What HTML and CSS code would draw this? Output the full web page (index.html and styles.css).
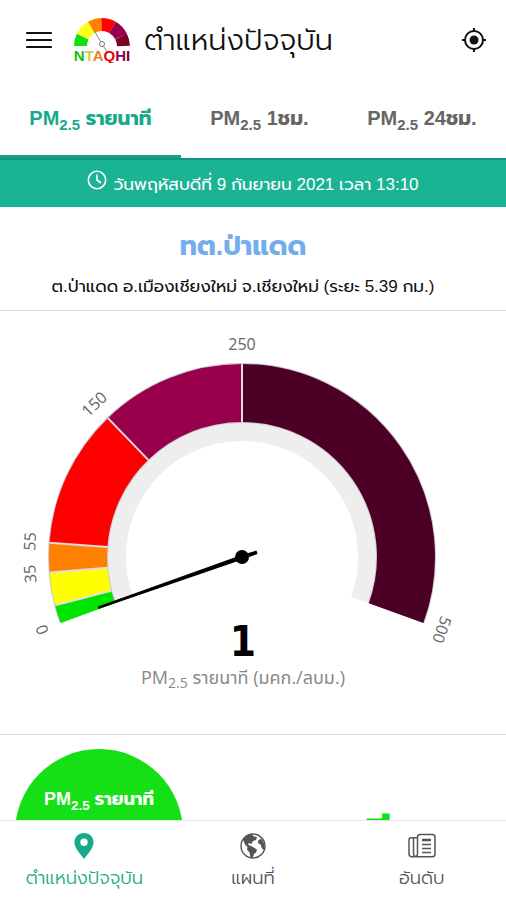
FILE: index.html
```
<!DOCTYPE html>
<html lang="th">
	<head>
		<meta charset="utf-8">
		<meta name="viewport" content="width=device-width, initial-scale=1">
		<title>NTAQHI</title>
		<link rel="stylesheet" href="styles.css">
	</head>
	<body>
		<header class="header">
			<button class="icon-btn" type="button" aria-label="เมนู">
				<svg width="26" height="26" viewBox="0 0 26 26"><path d="M1 6h24M1 13h24M1 20h24" stroke="#111" stroke-width="2.200" stroke-linecap="round"/></svg>
			</button>
			<svg class="logo" width="58" height="46" viewBox="0 0 58 46">
				<g fill="none" stroke-width="13">
					<path d="M7.500 29A21.500 21.500 0 0 1 9.700 19.500" stroke="#0fdf0f"/>
					<path d="M9.700 19.500A21.500 21.500 0 0 1 18.300 10.400" stroke="#ffff1a"/>
					<path d="M18.300 10.400A21.500 21.500 0 0 1 28.500 7.500" stroke="#ff8000"/>
					<path d="M28.500 7.500A21.500 21.500 0 0 1 39.500 10.300" stroke="#f00"/>
					<path d="M39.500 10.300A21.500 21.500 0 0 1 48 19.500" stroke="#99004c"/>
					<path d="M48 19.500A21.500 21.500 0 0 1 50.500 29" stroke="#7e0023"/>
				</g>
				<path d="M22 15L34 35" stroke="#888" stroke-width="1"/>
				<circle cx="29" cy="27" r="2.500" fill="#fff" stroke="#777"/>
				<text class="logo-text" x="29" y="44" text-anchor="middle"><tspan fill="#0fc40f">N</tspan><tspan fill="#dccb3c">T</tspan><tspan fill="#e98122">A</tspan><tspan fill="#e00">Q</tspan><tspan fill="#99004c">H</tspan><tspan fill="#7e0023">I</tspan></text>
			</svg>
			<h1 class="title">ตำแหน่งปัจจุบัน</h1>
			<button class="icon-btn" type="button" aria-label="ระบุตำแหน่ง">
				<svg width="24" height="24" viewBox="0 0 24 24"><circle cx="12" cy="12" r="9" fill="none" stroke="#111" stroke-width="2"/><circle cx="12" cy="12" r="4.500" fill="#111"/><path d="M12 0v4M12 20v4M0 12h4M20 12h4" stroke="#111" stroke-width="2"/></svg>
			</button>
		</header>

		<nav class="tabs">
			<button class="tab act" type="button">PM<sub>2.5</sub> รายนาที</button>
			<button class="tab" type="button">PM<sub>2.5</sub> 1ชม.</button>
			<button class="tab" type="button">PM<sub>2.5</sub> 24ชม.</button>
		</nav>

		<main class="content">
			<div class="date">
				<svg width="20" height="20" viewBox="0 0 20 20" fill="none" stroke="#fff" stroke-width="1.600"><circle cx="10" cy="10" r="8.700"/><path d="M10 4.500V10l4 3"/></svg>
				<span>วันพฤหัสบดีที่ 9 กันยายน 2021 เวลา 13:10</span>
			</div>

			<section class="station">
				<h2 class="station-name">ทต.ป่าแดด</h2>
				<p class="station-addr">ต.ป่าแดด อ.เมืองเชียงใหม่ จ.เชียงใหม่ (ระยะ 5.39 กม.)</p>
			</section>

			<section class="gauge">
				<svg class="gauge-svg" viewBox="0 0 506 423">
					<path d="M124.100 288.900A125.500 125.500 0 1 1 359.900 288.900" fill="none" stroke="#eee" stroke-width="19"/>
					<!-- scale 0 - 500, 220 degrees -->
					<g fill="none" stroke-width="58">
						<path d="M87.900 302.100A164 164 0 1 1 396.100 302.100" stroke="#ccc8d6" stroke-width="60"/>
						<path d="M242 82A164 164 0 0 1 396.100 302.100" stroke="#4c0026"/>
						<path d="M128.100 128A164 164 0 0 1 242 82" stroke="#99004c"/>
						<path d="M78.400 234A164 164 0 0 1 128.100 128" stroke="#f00"/>
						<path d="M78.500 259.200A164 164 0 0 1 78.400 234" stroke="#ff8000"/>
						<path d="M83.200 287.100A164 164 0 0 1 78.500 259.200" stroke="#ff0"/>
						<path d="M87.900 302.100A164 164 0 0 1 83.200 287.100" stroke="#00e400"/>
					</g>
					<g stroke="#e6dcdc" stroke-width="2">
						<path d="M49 246h58" transform="rotate(-14.500 242 246)"/>
						<path d="M49 246h58" transform="rotate(-4.600 242 246)"/>
						<path d="M49 246h58" transform="rotate(4.200 242 246)"/>
						<path d="M49 246h58" transform="rotate(46 242 246)"/>
						<path d="M49 246h58" transform="rotate(90 242 246)"/>
					</g>
					<g class="gauge-num" text-anchor="middle">
						<text x="242" y="39" transform="rotate(-110 242 246)">0</text>
						<text x="242" y="39" transform="rotate(-94.600 242 246)">35</text>
						<text x="242" y="39" transform="rotate(-85.800 242 246)">55</text>
						<text x="242" y="39" transform="rotate(-44 242 246)">150</text>
						<text x="242" y="39">250</text>
						<text x="242" y="39" transform="rotate(110 242 246)">500</text>
					</g>
					<path d="M98 295.500L98.500 298L242.500 248.500L257.500 243L256.500 239.500L241.500 244z" fill="#000"/>
					<circle cx="242" cy="246" r="7" fill="#000"/>
					<text class="gauge-value" x="243" y="345" text-anchor="middle">1</text>
					<text class="gauge-unit" x="243" y="373" text-anchor="middle">PM<tspan class="unit-sub" dy="4">2.5</tspan><tspan dy="-4"> รายนาที (มคก./ลบม.)</tspan></text>
				</svg>
			</section>

			<section class="summary">
				<div class="circle">PM<sub>2.5</sub> รายนาที</div>
				<div class="level">ดี</div>
			</section>
		</main>

		<nav class="tabbar">
			<a class="tabbar-item act" href="#">
				<svg width="28" height="28" viewBox="0 0 28 28"><path fill-rule="evenodd" d="M14 1C8.500 1 4.500 5 4.500 10.200C4.500 16 9 20 14 27C19 20 23.500 16 23.500 10.200C23.500 5 19.500 1 14 1zM14 6.500a3.700 3.700 0 1 1 0 7.400a3.700 3.700 0 0 1 0-7.400z" fill="currentColor"/></svg>
				<span>ตำแหน่งปัจจุบัน</span>
			</a>
			<a class="tabbar-item" href="#">
				<svg width="28" height="28" viewBox="0 0 28 28"><circle cx="14" cy="14" r="12" fill="none" stroke="currentColor" stroke-width="1.400"/><path fill="currentColor" d="M4 7.500C6 4.500 9 2.700 12.500 2.300L15 4.500l3 .5l-1 3l-3 1l-1.500 3l-2.500-1l-1 1.500l3 1.500l3.500 2l2.500 1.500l-1 3l-2 1.500l-1.500 4l-2-.5l-1-5l-2.500-3l.5-2.500L6 12.500zM20 4l3.500 4l2.300 5l-.8 5l-2.500-2l-.5-3l-3-2l.5-3l2.500-1z"/></svg>
				<span>แผนที่</span>
			</a>
			<a class="tabbar-item" href="#">
				<svg width="28" height="28" viewBox="0 0 28 28" fill="none" stroke="currentColor" stroke-width="1.500"><path d="M9.500 21V5q0-2.500 2.500-2.500h12.500q2.500 0 2.500 2.500v17q0 2.800-2.800 2.800H4q-3 0-3-3V8q0-2.300 2.300-2.300h6.200M9.500 21q0 3.500-2 3.500T5.500 21V6"/><path d="M14 8h9M14 12.500h9M14 16.500h9M14 20.500h9"/><path d="M14 8h9" stroke-width="2.500"/></svg>
				<span>อันดับ</span>
			</a>
		</nav>
	</body>
</html>
```
FILE: styles.css
```
*{
	margin: 0;
	padding: 0;
	box-sizing: border-box;
}
body{
	display: flex;
	flex-direction: column;
	height: 100vh;
	overflow: hidden;
	background-color: #fff;
	color: #111;
	font-family: "Liberation Sans", "Prompt", "Kanit", "Noto Sans Thai", sans-serif;
}
button{
	border: none;
	background: none;
	font-family: inherit;
}
sub{
	font-size: 75%;
	line-height: 0;
}
.header{
	display: flex;
	flex: none;
	align-items: center;
	height: 80px;
	padding: 0 20px 0 26px;
}
.icon-btn{
	display: flex;
}
.logo{
	margin-left: 21px;
}
.logo-text{
	font: bold 15px "Liberation Sans", sans-serif;
}
.title{
	flex: 1;
	margin-left: 13px;
	font-size: 29px;
	font-weight: 300;
}
.tabs{
	display: flex;
	flex: none;
	height: 78px;
}
.tab{
	flex: 1 1 auto;
	padding: 0 24px;
	border-bottom: 3px solid transparent;
	color: #666;
	font-size: 20px;
	font-weight: bold;
	white-space: nowrap;
}
.tab.act{
	border-color: #12a285;
	color: #16a98a;
}
.content{
	flex: 1;
	min-height: 0;
	overflow: hidden;
}
.date{
	display: flex;
	justify-content: center;
	gap: 6px;
	height: 49px;
	padding-top: 10px;
	border-top: 2px solid #129680;
	background-color: #1ab394;
	color: #fff;
	font-size: 17px;
	line-height: 30px;
}
.station{
	padding: 20px 20px 10px 0;
	border-bottom: 1px solid #ddd;
	text-align: center;
}
.station-name{
	color: #74aeea;
	font-size: 27px;
	line-height: 38px;
}
.station-addr{
	padding-top: 8px;
	font-size: 17px;
	line-height: 27px;
}
.gauge{
	border-bottom: 1px solid #ddd;
}
.gauge-svg{
	display: block;
	width: 100%;
	font-family: "Open Sans", "Noto Sans Thai", sans-serif;
}
.gauge-num{
	fill: #666;
	font-size: 16px;
}
.gauge-value{
	font-family: "DejaVu Sans Condensed", "DejaVu Sans", sans-serif;
	font-size: 42px;
	font-weight: bold;
}
.gauge-unit{
	fill: #888;
	font-size: 18px;
}
.unit-sub{
	font-size: 14px;
}
.summary{
	display: flex;
	padding: 14px 15px 0;
}
.circle{
	flex: none;
	width: 168px;
	height: 168px;
	padding-top: 38px;
	border-radius: 50%;
	background-color: #15df15;
	color: #fff;
	font-size: 18px;
	font-weight: bold;
	line-height: 24px;
	text-align: center;
}
.level{
	flex: 1;
	padding: 52px 0 0 76px;
	color: #15df15;
	font-size: 48px;
	font-weight: bold;
	line-height: 72px;
	text-align: center;
}
.tabbar{
	display: flex;
	flex: none;
	height: 80px;
	border-top: 1px solid #e6e6e6;
	background-color: #fff;
}
.tabbar-item{
	display: flex;
	flex: 1;
	flex-direction: column;
	align-items: center;
	gap: 6px;
	padding-top: 11px;
	color: #555;
	font-size: 18px;
	font-weight: 300;
	line-height: 24px;
	text-decoration: none;
}
.tabbar-item.act{
	color: #16a98a;
}
```
